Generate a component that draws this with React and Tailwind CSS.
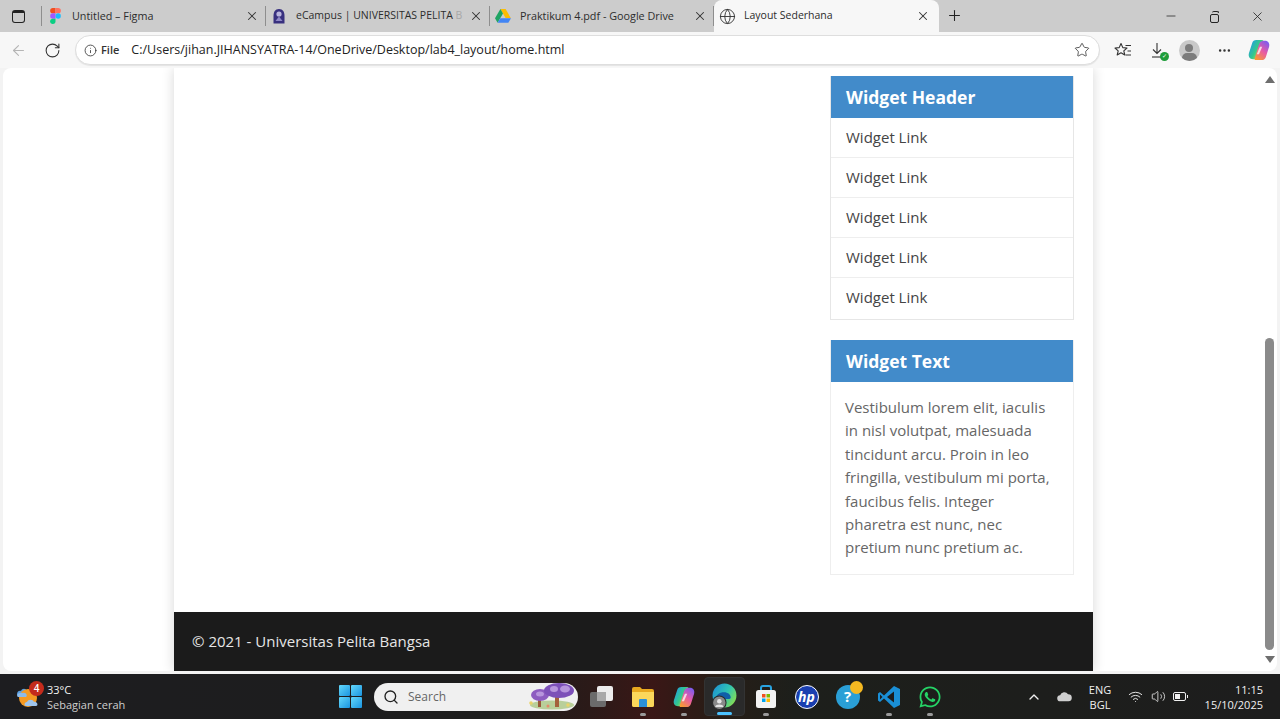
import { ArrowLeft, RotateCw, Info, Star, X, Plus, Minus, Search, ChevronUp, Wifi, Volume2, Globe, Ellipsis } from 'lucide-react';
import { FaWhatsapp } from 'react-icons/fa';

const uiFont = { fontFamily: '"Open Sans", "Noto Sans", sans-serif' };

const FigmaIcon = () => (
  <svg width="11" height="16" viewBox="0 0 12 18">
    <path d="M6 0H3a3 3 0 0 0 0 6h3z" fill="#f24e1e" />
    <path d="M6 0h3a3 3 0 0 1 0 6H6z" fill="#ff7262" />
    <path d="M6 6H3a3 3 0 0 0 0 6h3z" fill="#a259ff" />
    <circle cx="9" cy="9" r="3" fill="#1abcfe" />
    <path d="M6 12H3a3 3 0 1 0 3 3z" fill="#0acf83" />
  </svg>
);

const CampusIcon = () => (
  <svg width="16" height="17" viewBox="0 0 16 17">
    <path d="M8 1 C4 1 2.500 4 2.500 8 V15.500 H13.500 V8 C13.500 4 12 1 8 1Z" fill="#38307f" />
    <circle cx="8" cy="6" r="2.600" fill="#b9b4dd" />
    <path d="M4.500 13 L8 8.500 L11.500 13Z" fill="#8f88c6" />
  </svg>
);

const DriveIcon = () => (
  <svg width="16" height="14" viewBox="0 0 16 14">
    <path d="M5.400 0h5.200l5.200 9h-5.200z" fill="#fbbc04" />
    <path d="M5.400 0 0 9.200l2.600 4.500L8 4.500z" fill="#1fa463" />
    <path d="M2.600 13.700h10.700L16 9.200H5.300z" fill="#4285f4" />
  </svg>
);

// id has to differ per use, the icon shows up twice
const CopilotIcon = ({ id, size = 22 }) => (
  <svg width={size} height={size} viewBox="0 0 24 24">
    <defs>
      <linearGradient id={`${id}A`} x1="0" y1="0.2" x2="0.9" y2="0.8">
        <stop offset="0" stopColor="#1f9be8" />
        <stop offset="0.55" stopColor="#35c98a" />
        <stop offset="1" stopColor="#e7d548" />
      </linearGradient>
      <linearGradient id={`${id}B`} x1="0.8" y1="0" x2="0.2" y2="1">
        <stop offset="0" stopColor="#7a5cf0" />
        <stop offset="0.5" stopColor="#e85aa5" />
        <stop offset="1" stopColor="#f79a33" />
      </linearGradient>
    </defs>
    <path d="M9 1h6.500c1 0 1.500.8 1.200 1.800L12 18c-.7 2.300-2.500 4-5 4H5.500C2 22 0 19 1 15.500L4.500 4.500C5.200 2.300 6.800 1 9 1Z" fill={`url(#${id}A)`} />
    <path d="M15 23H8.500c-1 0-1.500-.8-1.200-1.800L12 6c.7-2.300 2.500-4 5-4h1.500C22 2 24 5 23 8.500L19.500 19.500C18.800 21.700 17.200 23 15 23Z" fill={`url(#${id}B)`} />
    <path d="M13 8.500h2.500L12 16.500H9.500z" fill="#ffffff" opacity="0.75" />
  </svg>
);

const WindowsLogo = () => (
  <svg width="23" height="23" viewBox="0 0 23 23">
    <defs>
      <linearGradient id="winG" x1="0" y1="0" x2="1" y2="1">
        <stop offset="0" stopColor="#63d8fb" />
        <stop offset="1" stopColor="#1a94e0" />
      </linearGradient>
    </defs>
    <rect x="0" y="0" width="11" height="11" rx="1" fill="url(#winG)" />
    <rect x="12" y="0" width="11" height="11" rx="1" fill="url(#winG)" />
    <rect x="0" y="12" width="11" height="11" rx="1" fill="url(#winG)" />
    <rect x="12" y="12" width="11" height="11" rx="1" fill="url(#winG)" />
  </svg>
);

const WeatherIcon = () => (
  <svg width="26" height="26" viewBox="0 0 26 26">
    <path d="M1 10 C1 7 4 6 5 7 C6 4 10 4 11 7 L11 11 L1 11Z" fill="#5b9fe0" />
    <circle cx="12" cy="14" r="9" fill="#f59a23" />
    <path d="M10 22 C8 22 8 18 11 18 C12 15 17 15 18 18 C21 17 23 22 20 22Z" fill="#9fc5ee" />
    <path d="M1 12 C1 9 5 8 7 9 C10 8 12 12 10 13 L2 13Z" fill="#8dbbea" />
  </svg>
);

const MushroomArt = () => (
  <svg width="48" height="27" viewBox="0 0 48 27">
    <ellipse cx="24" cy="22" rx="22" ry="4.500" fill="#b9cf9a" />
    <rect x="10" y="13" width="3" height="11" fill="#9a5a3a" />
    <rect x="27" y="9" width="4" height="15" fill="#a4603c" />
    <ellipse cx="12" cy="12" rx="9" ry="6" fill="#8d5cc0" />
    <ellipse cx="12" cy="11" rx="4" ry="2.500" fill="#b795dc" />
    <ellipse cx="31" cy="7.500" rx="15" ry="7.500" fill="#7d50b8" />
    <ellipse cx="37" cy="6" rx="5" ry="3.500" fill="#b795dc" />
    <ellipse cx="26" cy="6" rx="4" ry="3" fill="#b795dc" />
    <circle cx="3" cy="20" r="1.800" fill="#e9d36a" />
    <circle cx="20" cy="23" r="1.500" fill="#e58a6a" />
    <circle cx="40" cy="22" r="1.800" fill="#e9d36a" />
  </svg>
);

const TaskViewIcon = () => (
  <svg width="24" height="22" viewBox="0 0 24 22">
    <rect x="0" y="6" width="16" height="15" rx="2" fill="#6b6b6b" />
    <rect x="7" y="0" width="16" height="15" rx="2" fill="#ececec" />
    <rect x="7" y="6" width="9" height="9" fill="#a8a8a8" />
  </svg>
);

const FolderIcon = () => (
  <svg width="24" height="21" viewBox="0 0 24 21">
    <path d="M1 3a2 2 0 0 1 2-2h6l2 2h10a2 2 0 0 1 2 2v14a2 2 0 0 1-2 2H3a2 2 0 0 1-2-2z" fill="#e9a91f" />
    <path d="M1 6h22v13a2 2 0 0 1-2 2H3a2 2 0 0 1-2-2z" fill="#fbd75b" />
    <path d="M9 13h6a1 1 0 0 1 1 1v7H8v-7a1 1 0 0 1 1-1Z" fill="#2a8fd8" />
  </svg>
);

const EdgeIcon = () => (
  <svg width="27" height="27" viewBox="0 0 26 26">
    <defs>
      <linearGradient id="edgeG" x1="0" y1="0" x2="1" y2="0.6">
        <stop offset="0" stopColor="#1b8ad8" />
        <stop offset="0.6" stopColor="#2fc4b4" />
        <stop offset="1" stopColor="#7fdc5a" />
      </linearGradient>
    </defs>
    <circle cx="13" cy="12" r="11.500" fill="url(#edgeG)" />
    <path d="M6 23C2 18 4 10 11 9c5-.6 8 2 8 5 0 1-1 1.500-3 1.500H9C8 18 8 21 11 23z" fill="#0f5fa8" />
    <circle cx="8" cy="19" r="6.500" fill="#8a8a8a" stroke="#2b2b2b" strokeWidth="1" />
    <circle cx="8" cy="17.500" r="2.200" fill="#e4e4e4" />
    <path d="M4 23c.5-3 7.500-3 8 0z" fill="#e4e4e4" />
  </svg>
);

const StoreIcon = () => (
  <svg width="22" height="24" viewBox="0 0 22 24">
    <path d="M6 6V3a2 2 0 0 1 2-2h6a2 2 0 0 1 2 2v3" fill="none" stroke="#29a3e0" strokeWidth="2" />
    <rect x="1" y="5" width="20" height="18" rx="2.500" fill="#f3f3f3" />
    <rect x="7" y="9" width="3.500" height="3.500" fill="#f25022" />
    <rect x="11.500" y="9" width="3.500" height="3.500" fill="#7fba00" />
    <rect x="7" y="13.500" width="3.500" height="3.500" fill="#00a4ef" />
    <rect x="11.500" y="13.500" width="3.500" height="3.500" fill="#ffb900" />
  </svg>
);

const VsCodeIcon = () => (
  <svg width="24" height="24" viewBox="0 0 24 24">
    <path d="M17 1 23 4v16l-6 3-10-9.500L3 17l-2-1.500v-7L3 7l4 3.500z" fill="#1a8fd6" />
    <path d="M17 6.500 10 12l7 5.500z" fill="#1c1c1c" />
    <path d="M3 9.500v5L5.500 12z" fill="#1c1c1c" />
  </svg>
);

const FavouritesIcon = () => (
  <svg width="18" height="17" viewBox="0 0 18 17" fill="none" stroke="#333" strokeWidth="1.100" strokeLinejoin="round">
    <path d="M7 1.500 8.800 5.600 13 6l-3.200 2.800L10.800 13 7 10.800 3.200 13l1-4.200L1 6l4.200-.4z" />
    <path d="M11.500 3.500H17M13.500 9H17M11.500 13H17" />
  </svg>
);

const DownloadIcon = () => (
  <svg width="16" height="17" viewBox="0 0 16 17" fill="none" stroke="#333" strokeWidth="1.100">
    <path d="M7 1v10M3 7.500 7 11.500l4-4" />
    <path d="M2 15h10" />
  </svg>
);

const TaskbarSlot = ({ children, pinned = true, active = false }) => (
  <div className={`relative flex h-[39px] w-[41px] items-center justify-center rounded ${active ? 'bg-[#2a2a2a] border border-[#333]' : ''}`}>
    {children}
    {pinned && (
      <span className={`absolute bottom-0 h-[3px] rounded-full ${active ? 'w-[15px] bg-[#4cc2ff]' : 'w-[6px] bg-[#9a9a9a]'}`} />
    )}
  </div>
);

const Tab = ({ icon, title, active = false, small = false }) => (
  <div className={`flex h-full items-center pl-[1px] ${active ? 'w-[225px] rounded-t-lg bg-[#f7f7f7] pr-[9px]' : 'w-[224px]'}`}>
    <div className="flex w-[24px] justify-center">{icon}</div>
    <span className={`ml-[5px] flex-1 whitespace-nowrap text-[#2c2c2c] ${active || small ? 'text-[10.5px]' : 'text-[10.8px]'}`}>{title}</span>
    <X className="text-[#333]" size={14} strokeWidth={1.800} />
    {!active && <span className="ml-[6px] h-[20px] w-px bg-[#8e8e8e]" />}
  </div>
);

const WidgetLink = ({ last }) => (
  <a className={`block bg-white px-[15px] pt-[7px] text-[15px] leading-[24px] text-[#444] ${last ? 'h-[41px]' : 'h-[40px] border-b border-[#eeeeee]'}`}>
    Widget Link
  </a>
);

export default function App() {
  return (
    <div className="flex h-[719px] w-[1280px] flex-col overflow-hidden bg-[#f3f3f3]" style={uiFont}>
      {/* tab strip */}
      <div className="flex h-[32px] items-end bg-[#cccccc]">
        <div className="flex h-full w-[42px] items-center">
          <div className="ml-[12px] h-[13px] w-[13px] rounded-[3px] border-[1.500px] border-t-[3px] border-[#222]" />
          <span className="ml-[16px] h-[20px] w-px bg-[#8e8e8e]" />
        </div>
        <Tab icon={<FigmaIcon />} title="Untitled – Figma" />
        <Tab small icon={<CampusIcon />} title={<>eCampus | UNIVERSITAS PELITA <span className="text-[#a8a8a8]">B</span></>} />
        <Tab icon={<DriveIcon />} title="Praktikum 4.pdf - Google Drive" />
        <Tab active icon={<Globe size={17} strokeWidth={1.300} className="text-[#333]" />} title="Layout Sederhana" />
        <Plus className="ml-[7px] mb-[8px] text-[#222]" size={17} strokeWidth={1.500} />
        <div className="ml-auto flex h-full items-center gap-[29px] pr-[15px]">
          <Minus size={14} strokeWidth={1.300} className="text-[#222]" />
          <div className="relative h-[14px] w-[14px]">
            <span className="absolute bottom-0 left-[3px] h-[9px] w-[9px] rounded-[2px] border border-[#222] bg-[#cccccc]" />
            <span className="absolute left-[5px] top-[2px] h-[2px] w-[7px] rounded-t-[2px] border-t border-r border-[#222]" />
          </div>
          <X size={15} strokeWidth={1.300} className="text-[#222]" />
        </div>
      </div>

      {/* toolbar */}
      <div className="flex h-[36px] items-center bg-[#f7f7f7] pl-[10px]">
        <ArrowLeft size={17} strokeWidth={1.500} className="text-[#b5b5b5]" />
        <RotateCw size={17} strokeWidth={1.500} className="ml-[17px] text-[#333]" />
        <div className="ml-[14px] flex h-[30px] w-[1025px] items-center rounded-full border border-[#dedede] bg-white pl-[8px] pr-[9px] shadow-[0_1px_1px_rgba(0,0,0,0.08)]">
          <Info size={13} strokeWidth={1.500} className="text-[#333]" />
          <span className="ml-[4px] pt-px text-[11px] font-semibold text-[#333]">File</span>
          <span className="ml-[12px] pt-px text-[12.5px] text-[#222]">C:/Users/jihan.JIHANSYATRA-14/OneDrive/Desktop/lab4_layout/home.html</span>
          <Star size={16} strokeWidth={1.200} className="ml-auto text-[#333]" />
        </div>
        <div className="ml-[14px]"><FavouritesIcon /></div>
        <div className="relative ml-[18px]">
          <DownloadIcon />
          <span className="absolute -bottom-[2px] -right-[3px] flex h-[9px] w-[9px] items-center justify-center rounded-full bg-[#1f9d3a] text-[6px] leading-none text-white">✓</span>
        </div>
        <div className="relative ml-[13px] h-[21px] w-[21px] overflow-hidden rounded-full bg-[#c9c9c9]">
          <span className="absolute left-[6px] top-[4px] h-[8px] w-[8px] rounded-full bg-[#7c7c7c]" />
          <span className="absolute left-[3px] top-[13px] h-[10px] w-[15px] rounded-full bg-[#7c7c7c]" />
        </div>
        <Ellipsis size={15} className="ml-[17px] text-[#333]" />
        <div className="ml-[16px]"><CopilotIcon id="cpTop" /></div>
      </div>

      {/* viewport */}
      <div className="mx-[3px] flex h-[603px] overflow-hidden rounded-lg bg-white">
        <div className="flex-1 pl-[171px] pr-[171px]">
          <div className="flex h-full flex-col bg-white shadow-[0_0_12px_rgba(0,0,0,0.16)]">
            <aside className="ml-[656px] mt-[8px] w-[244px] flex-1">
              <div className="border border-t-0 border-[#e6e6e6]">
                <h3 className="h-[42px] bg-[#428bca] pl-[15px] pt-[8px] text-[17.5px] font-bold leading-[26px] text-white">Widget Header</h3>
                <WidgetLink />
                <WidgetLink />
                <WidgetLink />
                <WidgetLink />
                <WidgetLink last />
              </div>
              <div className="mt-[20px] border border-t-0 border-[#eeeeee]">
                <h3 className="h-[42px] bg-[#428bca] pl-[15px] pt-[8px] text-[17.5px] font-bold leading-[26px] text-white">Widget Text</h3>
                <p className="pb-[14px] pl-[14px] pr-[22px] pt-[14px] text-[15px] leading-[23.4px] text-[#666]">
                  Vestibulum lorem elit, iaculis in nisl volutpat, malesuada tincidunt arcu. Proin in leo fringilla, vestibulum mi porta, faucibus felis. Integer pharetra est nunc, nec pretium nunc pretium ac.
                </p>
              </div>
            </aside>
            <footer className="h-[59px] bg-[#1b1b1b] pl-[18px] pt-[17px] text-[15px] leading-[24px] text-[#e6e6e6]">
              © 2021 - Universitas Pelita Bangsa
            </footer>
          </div>
        </div>
        {/* scrollbar */}
        <div className="flex w-[13px] flex-col items-center pb-[8px] pr-[2px] pt-[8px]">
          <span className="h-0 w-0 border-x-[5px] border-b-[7px] border-x-transparent border-b-[#6e6e6e]" />
          <span className="mt-[255px] h-[312px] w-[9px] rounded-full bg-[#8a8a8a]" />
          <span className="mt-auto h-0 w-0 border-x-[5px] border-t-[7px] border-x-transparent border-t-[#6e6e6e]" />
        </div>
      </div>

      {/* taskbar */}
      <div className="mt-[3px] flex h-[45px] items-center bg-[linear-gradient(90deg,#1d1d20_0%,#1d1d1d_38%,#2b1a18_46%,#3a1716_51%,#271d16_56%,#1d1f1b_62%,#1d1d1d_100%)] text-white">
        <div className="relative ml-[16px]">
          <WeatherIcon />
          <span className="absolute -right-[2px] -top-[3px] flex h-[15px] w-[15px] items-center justify-center rounded-full bg-[#c42b1c] text-[10px] font-semibold leading-none">4</span>
        </div>
        <div className="ml-[5px] flex w-[300px] flex-col text-[11px] leading-[15px]">
          <span className="text-[#f2f2f2]">33°C</span>
          <span className="text-[#cfcfcf]">Sebagian cerah</span>
        </div>
        <div className="-ml-[8px]"><WindowsLogo /></div>
        <div className="ml-[12px] flex h-[28px] w-[204px] items-center rounded-full bg-[#f0f0f0] pl-[9px] pr-[2px] text-[#666]">
          <Search size={16} strokeWidth={2} className="text-[#222]" />
          <span className="ml-[9px] text-[12px]">Search</span>
          <div className="ml-auto"><MushroomArt /></div>
        </div>
        <div className="ml-[3px] flex items-center">
          <TaskbarSlot pinned={false}><TaskViewIcon /></TaskbarSlot>
          <TaskbarSlot><FolderIcon /></TaskbarSlot>
          <TaskbarSlot><CopilotIcon id="cpBar" /></TaskbarSlot>
          <TaskbarSlot active><EdgeIcon /></TaskbarSlot>
          <TaskbarSlot><StoreIcon /></TaskbarSlot>
          <TaskbarSlot pinned={false}>
            <span className="flex h-[24px] w-[24px] items-center justify-center rounded-full border border-white bg-[#1a3fb0] text-[14px] font-bold italic leading-none text-white">hp</span>
          </TaskbarSlot>
          <TaskbarSlot pinned={false}>
            <span className="relative flex h-[24px] w-[24px] items-center justify-center rounded-full bg-[#2a9fd6] text-[15px] font-bold leading-none text-white">
              ?
              <span className="absolute -right-[3px] -top-[4px] h-[13px] w-[13px] rounded-full bg-[#f5b921]" />
            </span>
          </TaskbarSlot>
          <TaskbarSlot><VsCodeIcon /></TaskbarSlot>
          <TaskbarSlot><FaWhatsapp size={24} className="text-[#25d366]" /></TaskbarSlot>
        </div>
        <div className="ml-auto flex items-center pr-[17px] text-[#f0f0f0]">
          <ChevronUp size={16} strokeWidth={2} />
          <svg width="15" height="11" viewBox="0 0 17 11" className="ml-[15px]">
            <path d="M4 11a3.500 3.500 0 0 1-.5-7A5 5 0 0 1 12.500 3 4 4 0 0 1 13 11z" fill="#cfcfcf" />
          </svg>
          <div className="ml-[16px] flex w-[24px] flex-col items-center text-[11px] leading-[15px]">
            <span>ENG</span>
            <span>BGL</span>
          </div>
          <Wifi size={15} strokeWidth={1.500} className="ml-[16px]" />
          <Volume2 size={15} strokeWidth={1.300} className="ml-[8px]" />
          <div className="relative ml-[7px] h-[9px] w-[13px] rounded-[2px] border border-[#f0f0f0]">
            <span className="absolute left-[1px] top-[1px] h-[5px] w-[5px] bg-[#f0f0f0]" />
            <span className="absolute -right-[3px] top-[2px] h-[3px] w-[1.500px] bg-[#f0f0f0]" />
          </div>
          <div className="ml-[18px] flex w-[59px] flex-col items-end text-[11px] leading-[15px]">
            <span>11:15</span>
            <span className="whitespace-nowrap">15/10/2025</span>
          </div>
        </div>
      </div>
    </div>
  );
}
